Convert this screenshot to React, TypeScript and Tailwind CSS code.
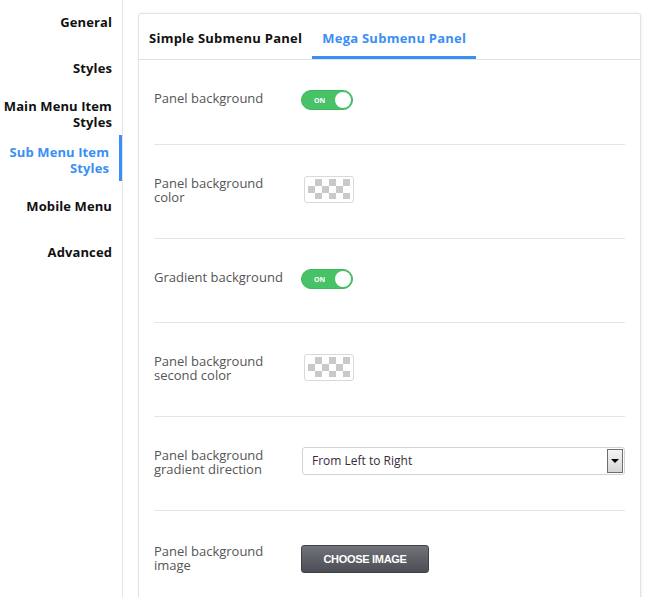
import React from 'react'

const navItems = [
  { label: 'General' },
  { label: 'Styles' },
  { label: 'Main Menu Item Styles' },
  { label: 'Sub Menu Item Styles', active: true },
  { label: 'Mobile Menu' },
  { label: 'Advanced' },
]

function Toggle() {
  return (
    <div className="relative flex h-[20px] w-[52px] items-center rounded-full border border-[#3fb55c] bg-[#47c266]">
      <span className="ml-[12px] text-[7px] font-bold leading-none text-white">ON</span>
      <span className="absolute right-[1px] top-[1px] h-[16px] w-[16px] rounded-full bg-white" />
    </div>
  )
}

function ColorSwatch() {
  return (
    <div className="ml-[3px] flex h-[27px] w-[50px] items-center justify-center rounded-[3px] border border-[#d9d9d9] bg-white">
      <div className="h-[20px] w-[42px] bg-[conic-gradient(#c9c9c9_25%,#ffffff_0_50%,#c9c9c9_0_75%,#ffffff_0)] bg-[length:14px_14px]" />
    </div>
  )
}

function Select() {
  return (
    <div className="ml-[1px] flex h-[28px] flex-1 items-center rounded-[3px] border border-[#cfd4d9] bg-white pl-[9px] pr-[1px]">
      <span className="flex-1 text-[12px] text-[#3a2a3a]">From Left to Right</span>
      <div className="flex h-[24px] w-[16px] items-center justify-center border border-[#6e6e6e] bg-gradient-to-b from-[#f4f4f4] to-[#d6d6d6]">
        <span className="h-0 w-0 border-x-[4px] border-t-[4px] border-x-transparent border-t-black" />
      </div>
    </div>
  )
}

function ChooseButton() {
  return (
    <button className="mt-[4px] flex h-[28px] w-[128px] items-center justify-center rounded-[3px] border border-[#3e4146] bg-gradient-to-b from-[#70747a] to-[#4b4f55] font-['Liberation_Sans',sans-serif] text-[11px] font-bold tracking-[-0.3px] text-white">
      CHOOSE IMAGE
    </button>
  )
}

// pb differs per row so the separators land where the screenshot has them;
// single-line labels sit a touch above the toggle's centre
const rows: { label: string; control: React.ReactNode; pb: string; lift?: boolean }[] = [
  { label: 'Panel background', control: <Toggle />, pb: 'pb-[34px]', lift: true },
  { label: 'Panel background color', control: <ColorSwatch />, pb: 'pb-[35px]' },
  { label: 'Gradient background', control: <Toggle />, pb: 'pb-[33px]', lift: true },
  { label: 'Panel background second color', control: <ColorSwatch />, pb: 'pb-[35px]' },
  { label: 'Panel background gradient direction', control: <Select />, pb: 'pb-[35px]' },
  { label: 'Panel background image', control: <ChooseButton />, pb: 'pb-[35px]' },
]

export default function App() {
  return (
    <div className="flex h-[597px] w-[651px] overflow-hidden bg-white font-['Open_Sans',sans-serif]">
      <aside className="w-[123px] shrink-0 border-r border-[#e3e3e3]">
        <ul className="-mt-[3px]">
          {navItems.map((item) => (
            <li
              key={item.label}
              className={`flex h-[46px] items-center justify-end pr-[10px] pt-[4px] text-right text-[13px] font-bold leading-[16px] tracking-[0.1px] ${
                item.active ? 'border-r-[3px] border-[#3a8ff5] pr-[7px] text-[#3a8ff5]' : 'text-[#111]'
              }`}
            >
              <span className="w-[112px]">{item.label}</span>
            </li>
          ))}
        </ul>
      </aside>

      <div className="flex-1 pl-[15px] pr-[10px] pt-[13px]">
        <div className="h-[620px] rounded-[3px] border border-[#e2e2e2] bg-white shadow-[1px_0_3px_rgba(0,0,0,0.06)]">
          <div className="flex border-b border-[#e2e2e2]">
            <div className="border-b-[3px] border-transparent px-[10px] pb-[9px] pt-[15px] text-[13px] font-bold leading-[18px] tracking-[0.25px] text-[#111]">
              Simple Submenu Panel
            </div>
            <div className="border-b-[3px] border-[#3a8ff5] px-[10px] pb-[9px] pt-[15px] text-[13px] font-bold leading-[18px] tracking-[0.25px] text-[#3a8ff5]">
              Mega Submenu Panel
            </div>
          </div>

          <div className="px-[15px]">
            {rows.map((row) => (
              <div
                key={row.label}
                className={`flex items-center border-b border-[#e5e5e5] pt-[30px] last:border-b-0 ${row.pb}`}
              >
                <div
                  className={`w-[147px] shrink-0 pr-[12px] text-[13px] leading-[14px] text-[#555] ${
                    row.lift ? '-mt-[2px] pb-[2px]' : 'mt-[1px] -mb-[1px]'
                  }`}
                >
                  {row.label}
                </div>
                <div className="flex flex-1 items-center">{row.control}</div>
              </div>
            ))}
          </div>
        </div>
      </div>
    </div>
  )
}
